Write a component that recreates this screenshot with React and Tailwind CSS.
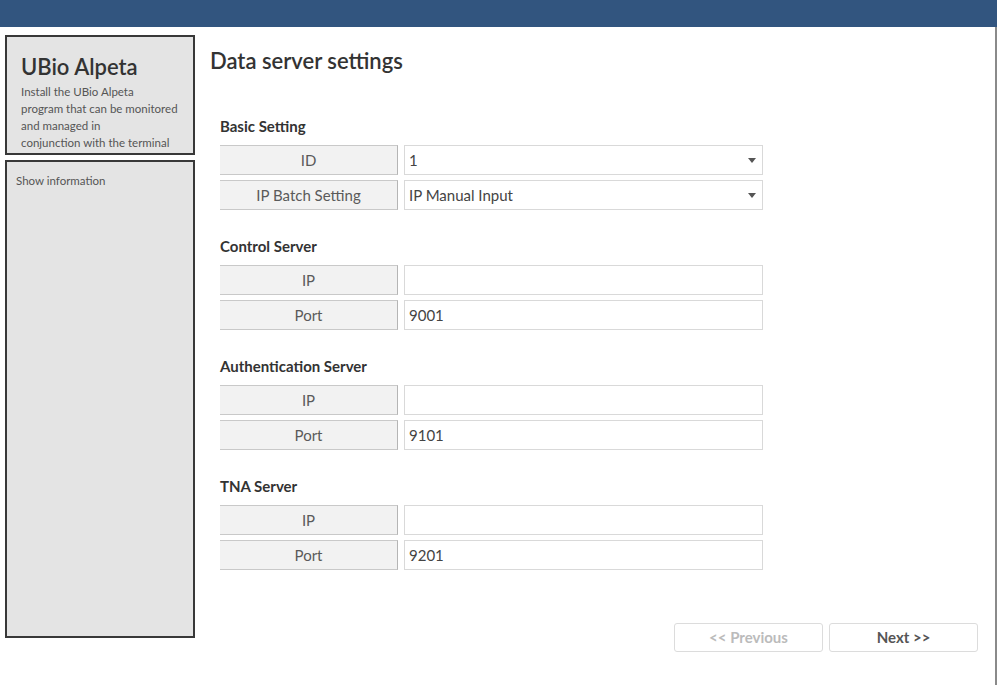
const font = { fontFamily: '"Source Sans Pro", Lato, "Noto Sans", sans-serif' }

const sections = [
  {
    title: 'Basic Setting',
    rows: [
      { label: 'ID', value: '1', select: true },
      { label: 'IP Batch Setting', value: 'IP Manual Input', select: true },
    ],
  },
  {
    title: 'Control Server',
    rows: [
      { label: 'IP', value: '' },
      { label: 'Port', value: '9001' },
    ],
  },
  {
    title: 'Authentication Server',
    rows: [
      { label: 'IP', value: '' },
      { label: 'Port', value: '9101' },
    ],
  },
  {
    title: 'TNA Server',
    rows: [
      { label: 'IP', value: '' },
      { label: 'Port', value: '9201' },
    ],
  },
]

function FieldRow({ label, value, select }) {
  return (
    <div className="flex h-[30px] gap-[6px]">
      <div className="flex w-[178px] items-center justify-center border-y border-r border-y-[#c9c9c9] border-r-[#b5b5b5] bg-[#f2f2f2] text-[15px] text-[#5a5a5a]">
        {label}
      </div>
      <div className="flex w-[359px] items-center justify-between border border-[#d9d9d9] bg-white pl-[4px] pr-[6px] text-[15px] text-[#444]">
        <span>{value}</span>
        {select ? (
          <svg width="8" height="5" viewBox="0 0 8 5">
            <path d="M0 0h8L4 5z" fill="#555" />
          </svg>
        ) : null}
      </div>
    </div>
  )
}

export default function App() {
  return (
    <div className="h-[685px] w-[997px] overflow-hidden bg-white" style={font}>
      <div className="h-[27px] bg-[#32557f]" />
      <div className="flex h-[658px] border-r-2 border-[#8a8a8a]">
        <aside className="ml-[5px] mt-[8px] flex w-[190px] flex-col gap-[5px]">
          <div className="h-[120px] border-2 border-[#383838] bg-[#e4e4e4] px-[14px] pt-[16px] text-[#444]">
            <h1 className="text-[22px] font-semibold leading-[28px] text-[#333]">UBio Alpeta</h1>
            <p className="mt-[2px] whitespace-nowrap text-[11.5px] leading-[17px] text-[#555]">
              Install the UBio Alpeta
              <br />
              program that can be monitored
              <br />
              and managed in
              <br />
              conjunction with the terminal
            </p>
          </div>
          <div className="h-[478px] border-2 border-[#383838] bg-[#e4e4e4] px-[9px] pt-[10px] text-[11.5px] text-[#555]">
            Show information
          </div>
        </aside>
        <main className="relative flex-1 pl-[15px] pt-[19px]">
          <h2 className="text-[22px] font-semibold leading-[30px] text-[#333]">Data server settings</h2>
          <div className="ml-[10px] mt-[34px] flex flex-col gap-[20px]">
            {sections.map((section) => (
              <section key={section.title}>
                <h3 className="h-[30px] pt-[6px] text-[15px] font-bold leading-[20px] text-[#333]">{section.title}</h3>
                <div className="mt-[5px] flex flex-col gap-[5px]">
                  {section.rows.map((row) => (
                    <FieldRow key={row.label} {...row} />
                  ))}
                </div>
              </section>
            ))}
          </div>
          <div className="mr-[17px] mt-[53px] flex justify-end gap-[6px]">
            <button className="h-[29px] w-[149px] rounded-[3px] border border-[#dcdcdc] bg-white text-[15px] font-bold text-[#bbb]">
              &lt;&lt; Previous
            </button>
            <button className="h-[29px] w-[149px] rounded-[3px] border border-[#dcdcdc] bg-white text-[15px] font-bold text-[#555]">
              Next &gt;&gt;
            </button>
          </div>
        </main>
      </div>
    </div>
  )
}
